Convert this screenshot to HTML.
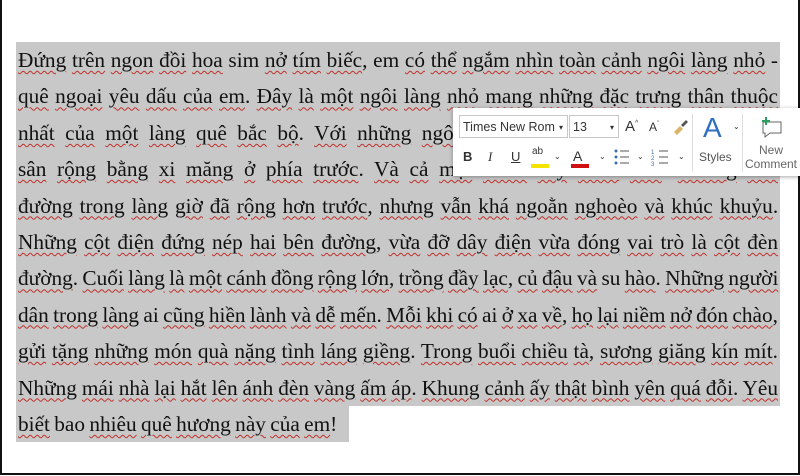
<!DOCTYPE html>
<html><head><meta charset="utf-8"><style>
body{margin:0;width:800px;height:476px;background:#fff;position:relative;overflow:hidden;font-family:"Liberation Serif",serif}
.frame{position:absolute;left:0;top:0;width:796px;height:473px;border-left:2px solid #111;border-right:2px solid #111;border-bottom:2px solid #111}
.txt{position:absolute;left:16px;top:42px;width:764px}
.l{height:36.4px;line-height:36.4px;font-size:21.3px;color:#111;background:#c8c8c8;text-align:justify;text-align-last:justify;padding:0 2px;white-space:nowrap;overflow:hidden;word-spacing:-1px}
.l.last{width:329px;text-align-last:left}
u{text-decoration:underline wavy #c0302a;text-decoration-thickness:1px;text-underline-offset:3px}
.tb{position:absolute;left:453px;top:108px;width:350px;height:68px;background:#fff;box-shadow:0 1px 4px rgba(0,0,0,.35);font-family:"Liberation Sans",sans-serif;color:#333}
.box{position:absolute;border:1px solid #c8c8c8;height:23px;font-size:12.5px;line-height:23px;padding-left:3px;box-sizing:border-box}
.ic{position:absolute;font-size:13px}
.sep{position:absolute;top:6px;width:1px;height:58px;background:#ddd}
</style></head><body>
<div class="frame"></div>
<div class="txt">
<div class="l"><u>Đứng</u> <u>trên</u> <u>ngon</u> <u>đồi</u> <u>hoa</u> sim <u>nở</u> <u>tím</u> <u>biếc</u>, em <u>có</u> <u>thể</u> <u>ngắm</u> <u>nhìn</u> <u>toàn</u> <u>cảnh</u> <u>ngôi</u> <u>làng</u> <u>nhỏ</u> -</div>
<div class="l"><u>quê</u> <u>ngoại</u> <u>yêu</u> <u>dấu</u> <u>của</u> <u>em</u>. <u>Đây</u> <u>là</u> <u>một</u> <u>ngôi</u> <u>làng</u> <u>nhỏ</u> <u>mang</u> <u>những</u> <u>đặc</u> <u>trưng</u> <u>thân</u> <u>thuộc</u></div>
<div class="l"><u>nhất</u> <u>của</u> <u>một</u> <u>làng</u> <u>quê</u> <u>bắc</u> <u>bộ</u>. <u>Với</u> <u>những</u> <u>ngôi</u> <u>nhà</u> <u>gạch</u> <u>đỏ</u> <u>mái</u> <u>ngói</u> <u>và</u> <u>khoảng</u></div>
<div class="l"><u>sân</u> <u>rộng</u> <u>bằng</u> <u>xi</u> <u>măng</u> <u>ở</u> <u>phía</u> <u>trước</u>. <u>Và</u> <u>cả</u> <u>một</u> <u>vườn</u> <u>cây</u> <u>xanh</u> <u>mát</u>. <u>Những</u> <u>con</u></div>
<div class="l"><u>đường</u> <u>trong</u> <u>làng</u> <u>giờ</u> <u>đã</u> <u>rộng</u> <u>hơn</u> <u>trước</u>, <u>nhưng</u> <u>vẫn</u> <u>khá</u> <u>ngoằn</u> <u>nghoèo</u> <u>và</u> <u>khúc</u> <u>khuỷu</u>.</div>
<div class="l"><u>Những</u> <u>cột</u> <u>điện</u> <u>đứng</u> <u>nép</u> <u>hai</u> <u>bên</u> <u>đường</u>, <u>vừa</u> <u>đỡ</u> <u>dây</u> <u>điện</u> <u>vừa</u> <u>đóng</u> <u>vai</u> <u>trò</u> <u>là</u> <u>cột</u> <u>đèn</u></div>
<div class="l"><u>đường</u>. <u>Cuối</u> <u>làng</u> <u>là</u> <u>một</u> <u>cánh</u> <u>đồng</u> <u>rộng</u> <u>lớn</u>, <u>trồng</u> <u>đầy</u> <u>lạc</u>, <u>củ</u> <u>đậu</u> <u>và</u> su <u>hào</u>. <u>Những</u> <u>người</u></div>
<div class="l"><u>dân</u> <u>trong</u> <u>làng</u> ai <u>cũng</u> <u>hiền</u> <u>lành</u> <u>và</u> <u>dễ</u> <u>mến</u>. <u>Mỗi</u> <u>khi</u> <u>có</u> ai <u>ở</u> <u>xa</u> <u>về</u>, <u>họ</u> <u>lại</u> <u>niềm</u> <u>nở</u> <u>đón</u> <u>chào</u>,</div>
<div class="l"><u>gửi</u> <u>tặng</u> <u>những</u> <u>món</u> <u>quà</u> <u>nặng</u> <u>tình</u> <u>láng</u> <u>giềng</u>. <u>Trong</u> <u>buổi</u> <u>chiều</u> <u>tà</u>, <u>sương</u> <u>giăng</u> <u>kín</u> <u>mít</u>.</div>
<div class="l"><u>Những</u> <u>mái</u> <u>nhà</u> <u>lại</u> <u>hắt</u> <u>lên</u> <u>ánh</u> <u>đèn</u> <u>vàng</u> <u>ấm</u> <u>áp</u>. <u>Khung</u> <u>cảnh</u> <u>ấy</u> <u>thật</u> <u>bình</u> <u>yên</u> <u>quá</u> <u>đỗi</u>. <u>Yêu</u></div>
<div class="l last"><u>biết</u> bao <u>nhiêu</u> <u>quê</u> <u>hương</u> <u>này</u> <u>của</u> <u>em</u>!</div>
</div>
<div class="tb">
<div class="box" style="left:6px;top:7px;width:109px">Times New Rom<span style="position:absolute;right:4px;font-size:8px">▾</span></div>
<div class="box" style="left:116px;top:7px;width:50px">13<span style="position:absolute;right:4px;font-size:8px">▾</span></div>
<div class="ic" style="left:172px;top:10px;font-size:15px">A<sup style="font-size:7px">^</sup></div>
<div class="ic" style="left:196px;top:12px;font-size:12px">A<sup style="font-size:7px">ˇ</sup></div>
<svg style="position:absolute;left:218px;top:8px" width="20" height="20"><path d="M3 16l6-6 3 3-6 6z" fill="#d9b56a"/><path d="M10 9l5-5 2 2-5 5z" fill="#555"/></svg>
<div class="ic" style="left:10px;top:41px;font-weight:bold">B</div>
<div class="ic" style="left:35px;top:41px;font-style:italic;font-family:'Liberation Serif',serif">I</div>
<div class="ic" style="left:58px;top:41px;text-decoration:underline">U</div>
<div class="ic" style="left:79px;top:38px;font-size:10px">ab</div><div style="position:absolute;left:78px;top:56px;width:18px;height:4px;background:#f5e400"></div>
<div class="ic" style="left:101px;top:44px;font-size:8px">⌄</div>
<div class="ic" style="left:120px;top:40px;font-size:14px">A</div><div style="position:absolute;left:118px;top:56px;width:18px;height:4px;background:#d01010"></div>
<div class="ic" style="left:146px;top:44px;font-size:8px">⌄</div>
<svg style="position:absolute;left:160px;top:40px" width="60" height="20"><g fill="#3a6fb5"><circle cx="3" cy="3" r="1.5"/><circle cx="3" cy="9" r="1.5"/><circle cx="3" cy="15" r="1.5"/></g><g stroke="#555"><path d="M7 3h9M7 9h9M7 15h9M46 3h9M46 9h9M46 15h9"/></g><text x="38" y="6" font-size="6" fill="#3a6fb5">1</text><text x="38" y="12" font-size="6" fill="#3a6fb5">2</text><text x="38" y="18" font-size="6" fill="#3a6fb5">3</text></svg>
<div class="ic" style="left:184px;top:44px;font-size:8px">⌄</div>
<div class="ic" style="left:225px;top:44px;font-size:8px">⌄</div>
<div class="sep" style="left:239px"></div>
<div style="position:absolute;left:250px;top:4px;font-size:28px;color:#2f6fc0;font-family:'Liberation Sans',sans-serif">A</div>
<div class="ic" style="left:280px;top:14px;font-size:8px">⌄</div>
<div class="ic" style="left:246px;top:42px;font-size:12px;color:#555">Styles</div>
<div class="sep" style="left:289px"></div>
<svg style="position:absolute;left:306px;top:8px" width="26" height="24"><path d="M4 6h18v11H11l-5 4v-4H4z" fill="none" stroke="#666"/><path d="M7 1v8M3 5h8" stroke="#2aa060" stroke-width="2"/></svg>
<div class="ic" style="left:306px;top:35px;font-size:12px;color:#666">New</div>
<div class="ic" style="left:292px;top:49px;font-size:12px;color:#666">Comment</div>
</div>
</body></html>
